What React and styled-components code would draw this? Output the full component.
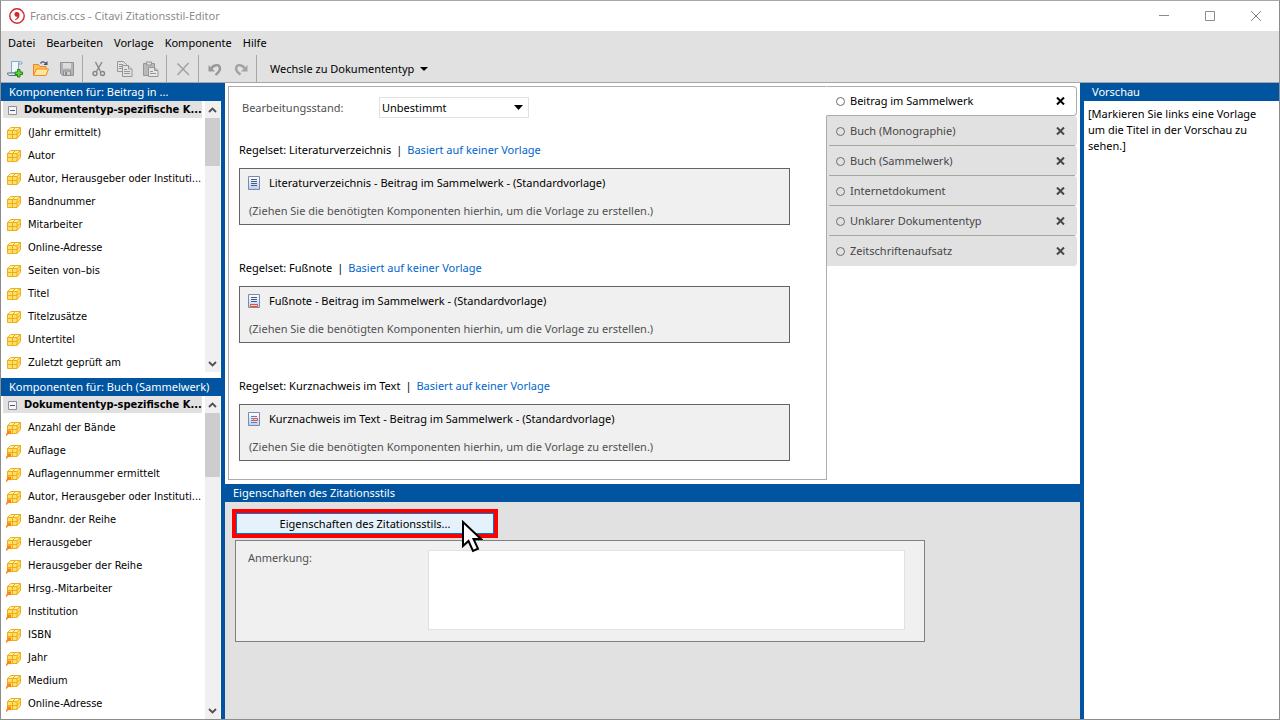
import React from 'react';
import styled, { createGlobalStyle } from 'styled-components';

const BLUE = '#0054a0';
const CHROME = '#e1e1e1';

const GlobalStyle = createGlobalStyle`
  * { box-sizing: border-box; }
  body {
    margin: 0;
    font-family: 'Noto Sans', 'Segoe UI', sans-serif;
    font-size: 11px;
    line-height: 16px;
    color: #000;
  }
  button, select, textarea {
    font: inherit;
    color: inherit;
    margin: 0;
    padding: 0;
    border: 0;
    border-radius: 0;
    background: none;
  }
  svg { display: block; flex: none; }
`;

const Window = styled.div`
  height: 100vh;
  min-height: 600px;
  display: flex;
  flex-direction: column;
  background: #fff;
  border: 1px solid #8c8c8c;
  border-top-color: #a8a8a8;
`;

const TitleBar = styled.header`
  display: flex;
  align-items: center;
  height: 30px;
  flex: none;
  padding-left: 8px;
  gap: 5px;
  color: #8c8c8c;
`;

const Title = styled.h1`
  flex: 1;
  margin: 0;
  font-size: 11px;
  font-weight: 400;
`;

const Controls = styled.div`
  display: flex;
`;

const WindowButton = styled.button`
  width: 46px;
  height: 30px;
  display: grid;
  place-items: center;
  color: #8c8c8c;
`;

const MenuBar = styled.nav`
  display: flex;
  align-items: center;
  gap: 11px;
  height: 24px;
  flex: none;
  padding-left: 7px;
  background: ${CHROME};
`;

const ToolBar = styled.div`
  display: flex;
  align-items: center;
  height: 28px;
  flex: none;
  background: ${CHROME};
  border-bottom: 1px solid #a6a6a6;
`;

const ToolGroup = styled.div`
  display: flex;
  align-items: center;
  align-self: stretch;
  gap: 10px;
  padding: 0 7px 0 8px;
  border-right: 1px solid #a6a6a6;

  &:first-child { padding-left: 6px; }
`;

const DocTypeButton = styled.button`
  display: flex;
  align-items: center;
  gap: 6px;
  margin-left: 13px;
`;

const Body = styled.div`
  flex: 1;
  min-height: 0;
  display: flex;
`;

const Sidebar = styled.aside`
  width: 224px;
  flex: none;
  display: flex;
  flex-direction: column;
  border-right: 4px solid ${BLUE};
`;

const PanelTitle = styled.h2`
  margin: 0;
  flex: none;
  height: 18px;
  padding-left: 8px;
  line-height: 18px;
  font-size: 11px;
  font-weight: 400;
  color: #fff;
  background: ${BLUE};
  white-space: nowrap;
`;

const ListArea = styled.section`
  display: flex;
  min-height: 0;
  flex: ${(p) => (p.$fill ? '1' : 'none')};
  height: ${(p) => (p.$fill ? 'auto' : '277px')};
  padding-right: 1px;
  padding-bottom: ${(p) => (p.$fill ? '0' : '6px')};
`;

const ListColumn = styled.div`
  flex: 1;
  min-width: 0;
  overflow: hidden;
  padding: 0 3px 0 2px;
  font-family: 'DejaVu Sans Condensed', Tahoma, sans-serif;
`;

const GroupRow = styled.div`
  display: flex;
  align-items: center;
  gap: 7px;
  height: 17px;
  margin-bottom: 3px;
  padding: 1px 0 0 5px;
  background: ${CHROME};
  font-weight: 700;
  line-height: 16px;
  white-space: nowrap;
`;

const PlainButton = styled.button`
  display: grid;
  place-items: center;
`;

const Items = styled.ul`
  margin: 0;
  padding: 0;
  list-style: none;
`;

const Item = styled.li`
  display: flex;
  align-items: center;
  gap: 6px;
  height: 23px;
  padding-left: 3px;
  white-space: nowrap;
`;

const ScrollBar = styled.div`
  width: 15px;
  flex: none;
  display: flex;
  flex-direction: column;
  background: #f0f0f0;
`;

const ScrollButton = styled.button`
  height: 17px;
  display: grid;
  place-items: center;
  color: #505050;
`;

const Thumb = styled.div`
  height: ${(p) => (p.$long ? '64px' : '48px')};
  margin-bottom: auto;
  background: #cdcdcd;
`;

const Main = styled.main`
  flex: 1;
  min-width: 0;
  display: flex;
  flex-direction: column;
`;

const Workspace = styled.div`
  flex: 1;
  min-height: 0;
  display: flex;
  padding: 3px 3px 4px;
`;

const Canvas = styled.section`
  flex: 1;
  min-width: 0;
  padding: 10px 36px 0 10px;
  border: 1px solid #acacac;
`;

const StatusRow = styled.div`
  display: flex;
  align-items: center;
  padding-left: 3px;
  height: 21px;
  margin-bottom: 24px;
  color: #505050;
`;

const StatusLabel = styled.label`
  width: 137px;
`;

const SelectBox = styled.div`
  display: grid;
  align-items: center;
  width: 150px;
  height: 21px;
  border: 1px solid #e1e1e1;

  & > * { grid-area: 1 / 1; }
  & > svg { justify-self: end; margin-right: 5px; pointer-events: none; }
`;

const Select = styled.select`
  appearance: none;
  width: 100%;
  height: 19px;
  padding-left: 2px;
  color: #000;
`;

const RuleSet = styled.section`
  margin-bottom: 35px;
`;

const RuleTitle = styled.h3`
  display: flex;
  gap: 5px;
  margin: 0 0 10px;
  font-size: 11px;
  font-weight: 400;
`;

const Link = styled.a`
  color: #0066cc;
  text-decoration: none;
`;

const TemplateBox = styled.div`
  padding: 6px 8px 5px;
  border: 1px solid #646464;
  background: #f0f0f0;
`;

const TemplateName = styled.div`
  display: flex;
  align-items: center;
  gap: 9px;
  margin-bottom: 12px;
`;

const Hint = styled.p`
  margin: 0;
  padding-left: 1px;
  color: #505050;
`;

const Tabs = styled.div`
  width: 251px;
  flex: none;
  margin-left: -1px;
`;

const Tab = styled.div`
  display: flex;
  align-items: center;
  height: 30px;
  padding-right: 11px;
  border: 1px solid #acacac;
  border-left-color: #fff;
  border-radius: 0 4px 4px 0;
  background: #fff;
`;

const IdleTab = styled(Tab)`
  margin-left: 1px;
  padding-right: 12px;
  border: 0;
  border-radius: 0 3px 3px 0;
  color: #464646;
  background: linear-gradient(#a6a89c, #a6a89c) 2px 100% / calc(100% - 4px) ${(p) => (p.$last ? '0' : '1px')} no-repeat ${CHROME};
`;

const TabButton = styled.button`
  flex: 1;
  display: flex;
  align-items: center;
  gap: 5px;
  padding-left: 9px;
  text-align: left;
`;

const Ring = styled.span`
  width: 9px;
  height: 9px;
  border: 1px solid #6e6e6e;
  border-radius: 50%;
`;

const Properties = styled.section`
  height: 235px;
  flex: none;
  background: ${CHROME};
`;

const PropertiesBody = styled.div`
  padding: 7px 7px 0;
`;

const Highlight = styled.div`
  position: relative;
  width: 266px;
  border: 4px solid #ff0000;
`;

const PropertiesButton = styled.button`
  display: block;
  width: 100%;
  height: 21px;
  border: 1px solid #0078d7;
  background: #e5f1fb;
`;

const Pointer = styled.svg`
  position: absolute;
  left: 225px;
  top: 7px;
`;

const NoteBox = styled.div`
  display: flex;
  width: 690px;
  max-width: 100%;
  margin: 2px 0 0 3px;
  padding: 9px 19px 11px 12px;
  border: 1px solid #808080;
  background: #f0f0f0;
  color: #505050;
`;

const NoteLabel = styled.label`
  width: 180px;
`;

const NoteText = styled.textarea`
  flex: 1;
  height: 80px;
  resize: none;
  border: 1px solid #e1e1e1;
  background: #fff;
`;

const Preview = styled.aside`
  width: 199px;
  flex: none;
  border-left: 4px solid ${BLUE};
`;

const PreviewText = styled.p`
  margin: 0;
  padding: 5px 4px;
`;

const Logo = () => (
  <svg width="16" height="16" viewBox="0 0 16 16">
    <circle cx="8" cy="8" r="7.200" fill="#fff" stroke="#d8232a" strokeWidth="1.400" />
    <path d="M8 4a2.300 2.300 0 1 0 .4 4.500C8.200 9.800 7.400 10.700 6 11.400l.4.800c2.600-1 4.100-3 4.100-5.300C10.500 5.100 9.500 4 8 4z" fill="#d8232a" />
  </svg>
);

const Caret = () => (
  <svg width="9" height="5" viewBox="0 0 9 5"><path d="M0 0h9L4.500 5z" fill="#000" /></svg>
);

const SmallCaret = () => (
  <svg width="8" height="4" viewBox="0 0 8 4"><path d="M0 0h8L4 4z" fill="#000" /></svg>
);

const NewIcon = () => (
  <svg width="16" height="18" viewBox="0 0 16 18">
    <path d="M4.500 1.500h8c-1 1-1 2-1 3.500v8h-7z" fill="#eff6fd" stroke="#8aa6c4" />
    <path d="M12 1.500h1.500c1.200 0 1.500 1 1.500 2.500h-3.500c0-1.300 0-2 .5-2.500z" fill="#cfe0f2" stroke="#8aa6c4" />
    <path d="M.5 13h8c0 1.500 1 2.500 2 2.500h-8C1.300 15.500.5 14.500.5 13z" fill="#dfeaf6" stroke="#526f91" />
    <path d="M10.500 9.500h2.500v2.500h2.500v2.500H13V17h-2.500v-2.500H8V12h2.500z" fill="#61d33b" stroke="#238512" />
  </svg>
);

const OpenIcon = () => (
  <svg width="16" height="18" viewBox="0 0 16 18">
    <path d="M.5 15V4.500h5l1.500 2h6V15z" fill="#ffc35c" stroke="#ef8526" />
    <path d="M.5 15.500 3.500 9h12L13 15.500z" fill="#ffe6a0" stroke="#f28b27" />
    <path d="M7.500 3.500c1-2 3.500-2.300 5-.3" fill="none" stroke="#405068" strokeWidth="1.300" />
    <path d="M14.500 1v4h-4z" fill="#405068" />
  </svg>
);

const SaveIcon = () => (
  <svg width="16" height="16" viewBox="0 0 16 16">
    <path d="M1.500 1.500h13v13h-11l-2-2z" fill="#b4b4b4" stroke="#929292" />
    <path d="M4 2h8v5.500H4z" fill="#dcdcdc" />
    <path d="M4.500 10h7v4.500h-7z" fill="#cecece" stroke="#8c8c8c" />
    <path d="M6 11h2v3H6z" fill="#8c8c8c" />
  </svg>
);

const CutIcon = () => (
  <svg width="16" height="16" viewBox="0 0 16 16" fill="none" stroke="#858585">
    <path d="M4.500 1 9.500 10.500M11 1 5.500 10.500" strokeWidth="1.400" />
    <circle cx="4" cy="12.500" r="2" strokeWidth="1.400" />
    <circle cx="11.500" cy="12.500" r="2" strokeWidth="1.400" />
  </svg>
);

const CopyIcon = () => (
  <svg width="16" height="16" viewBox="0 0 16 16" fill="#e2e2e2" stroke="#969696">
    <path d="M.5.5h6l3 3v7h-9z" />
    <path d="M2 3.500h4M2 5.500h4M2 7.500h3" />
    <path d="M5.500 4.500h6l3.500 3.500v7.500H5.500z" />
    <path d="M11.500 4.500V8H15M7 8.500h3M7 10.500h6M7 12.500h6" />
  </svg>
);

const PasteIcon = () => (
  <svg width="16" height="16" viewBox="0 0 16 16" fill="#b9b9b9" stroke="#969696">
    <path d="M.5 2.500h11v12H.5z" />
    <path d="M3.500 1h5v3h-5z" fill="#dedede" />
    <path d="M5.500 6.500h6l3.500 3v6H5.500z" fill="#e6e6e6" />
    <path d="M11.500 6.500v3H15M7 10.500h3M7 12.500h6" />
  </svg>
);

const DeleteIcon = () => (
  <svg width="16" height="16" viewBox="0 0 16 16" fill="none" stroke="#a3a3a3" strokeWidth="1.600">
    <path d="M2.500 2.500 14 14M13.500 2 2.500 14" />
  </svg>
);

const UndoIcon = () => (
  <svg width="16" height="16" viewBox="0 0 16 16">
    <path d="M4 8C6 3.500 12.500 2.500 13 7.500c0 3-2.500 4.500-4.500 6.500" fill="none" stroke="#999" strokeWidth="2.400" />
    <path d="M1.500 4v6.500H8z" fill="#999" />
  </svg>
);

const RedoIcon = () => (
  <svg width="16" height="16" viewBox="0 0 16 16">
    <path d="M12 8C10 3.500 3.500 2.500 3 7.500c0 3 2.500 4.500 4.500 6" fill="none" stroke="#a3a3a3" strokeWidth="2.400" />
    <path d="M14.500 4v6.500H8z" fill="#a3a3a3" />
  </svg>
);

const BoxIcon = ({ shortcut }) => (
  <svg width="16" height="16" viewBox="0 0 16 16">
    <path d="M1.500 5.500 5 2.500h9.500v7l-3.500 4H1.500z" fill="#ffde70" stroke="#eeae16" />
    <path d="M2 5.500h9L14 3H5z" fill="#fff0ae" />
    <path d="M1.500 5.500H11v8M11 5.500l3.500-3M6.500 5.500v8M6.500 5.500l3-3M1.500 9.500H11l3.500-3.500" fill="none" stroke="#eeae16" />
    {shortcut && <path d="M0 15.500c0-1.500.6-2.600 1.600-3.300L.8 10.500H5v4l-1.300-1C2.300 14 1.200 14.500 1 16z" fill="#ff8214" />}
  </svg>
);

const PageIcon = ({ kind }) => (
  <svg width="12" height="16" viewBox="0 0 12 16">
    <defs>
      <linearGradient id="sheet" x2="0" y2="1">
        <stop offset="0" stopColor="#fff" />
        <stop offset="1" stopColor="#b8cdf4" />
      </linearGradient>
    </defs>
    <path d="M.5 1.500h11v13H.5z" fill="url(#sheet)" stroke="#7b8cab" />
    {kind === 'list' && <path d="M3 4.500h6M3 6.500h6M3 8.500h6M3 10.500h6" stroke="#4c5c7c" />}
    {kind === 'foot' && (
      <>
        <path d="M3 4.500h6M3 6.500h6M3 8.500h6" stroke="#4c5c7c" />
        <path d="M2.500 11.500h7v2h-7z" fill="#ffd8cc" stroke="#e8502a" />
      </>
    )}
    {kind === 'text' && (
      <>
        <path d="M3 5.500h6M3 7.500h2M3 9.500h2M3 11.500h6" stroke="#5f80be" />
        <path d="M5.500 7.500h4v2h-4z" fill="#ffd8cc" stroke="#e8502a" />
      </>
    )}
  </svg>
);

const CollapseIcon = () => (
  <svg width="9" height="9" viewBox="0 0 9 9">
    <path d="M.5.5h8v8h-8z" fill="#f6f6f6" stroke="#919191" />
    <path d="M2 4.500h5" stroke="#3c5a9a" />
  </svg>
);

const Chevron = ({ up }) => (
  <svg width="9" height="6" viewBox="0 0 9 6" fill="none" stroke="currentColor" strokeWidth="1.800">
    <path d={up ? 'M1 5 4.500 1.500 8 5' : 'M1 1l3.500 3.500L8 1'} />
  </svg>
);

const CrossIcon = () => (
  <svg width="9" height="8" viewBox="0 0 9 8" stroke="currentColor" strokeWidth="2">
    <path d="M1 .5 8 7.500M8 .5 1 7.500" />
  </svg>
);

const TOOLS = [
  [['Neu', NewIcon], ['Öffnen', OpenIcon], ['Speichern', SaveIcon]],
  [['Ausschneiden', CutIcon], ['Kopieren', CopyIcon], ['Einfügen', PasteIcon]],
  [['Löschen', DeleteIcon]],
  [['Rückgängig', UndoIcon], ['Wiederholen', RedoIcon]],
];

const MENUS = ['Datei', 'Bearbeiten', 'Vorlage', 'Komponente', 'Hilfe'];

const ARTICLE_PARTS = [
  '(Jahr ermittelt)', 'Autor', 'Autor, Herausgeber oder Instituti...', 'Bandnummer', 'Mitarbeiter',
  'Online-Adresse', 'Seiten von–bis', 'Titel', 'Titelzusätze', 'Untertitel', 'Zuletzt geprüft am',
];

const BOOK_PARTS = [
  'Anzahl der Bände', 'Auflage', 'Auflagennummer ermittelt', 'Autor, Herausgeber oder Instituti...',
  'Bandnr. der Reihe', 'Herausgeber', 'Herausgeber der Reihe', 'Hrsg.-Mitarbeiter', 'Institution',
  'ISBN', 'Jahr', 'Medium', 'Online-Adresse',
];

const RULES = [
  ['Literaturverzeichnis', 'list'],
  ['Fußnote', 'foot'],
  ['Kurznachweis im Text', 'text'],
];

const OTHER_TYPES = [
  'Buch (Monographie)', 'Buch (Sammelwerk)', 'Internetdokument', 'Unklarer Dokumententyp', 'Zeitschriftenaufsatz',
];

const WindowControls = () => (
  <Controls>
    <WindowButton aria-label="Minimieren">
      <svg width="11" height="11" stroke="currentColor"><path d="M0 4.500h10" /></svg>
    </WindowButton>
    <WindowButton aria-label="Maximieren">
      <svg width="11" height="11" fill="none" stroke="currentColor"><path d="M.5.5h9v9H.5z" /></svg>
    </WindowButton>
    <WindowButton aria-label="Fenster schließen">
      <svg width="11" height="11" stroke="currentColor"><path d="M0 0l10 10M10 0L0 10" /></svg>
    </WindowButton>
  </Controls>
);

const ComponentList = ({ items, fill, shortcut }) => (
  <ListArea $fill={fill}>
    <ListColumn>
      <GroupRow>
        <PlainButton aria-label="Gruppe zuklappen"><CollapseIcon /></PlainButton>
        Dokumententyp-spezifische K...
      </GroupRow>
      <Items>
        {items.map((name) => (
          <Item key={name}><BoxIcon shortcut={shortcut} />{name}</Item>
        ))}
      </Items>
    </ListColumn>
    <ScrollBar>
      <ScrollButton aria-label="Nach oben"><Chevron up /></ScrollButton>
      <Thumb $long={fill} />
      <ScrollButton aria-label="Nach unten"><Chevron /></ScrollButton>
    </ScrollBar>
  </ListArea>
);

export default function App() {
  return (
    <>
      <GlobalStyle />
      <Window>
        <TitleBar>
          <Logo />
          <Title>Francis.ccs - Citavi Zitationsstil-Editor</Title>
          <WindowControls />
        </TitleBar>
        <MenuBar>
          {MENUS.map((m) => <PlainButton key={m}>{m}</PlainButton>)}
        </MenuBar>
        <ToolBar>
          {TOOLS.map((group, i) => (
            <ToolGroup key={i}>
              {group.map(([label, Icon]) => (
                <PlainButton key={label} aria-label={label}><Icon /></PlainButton>
              ))}
            </ToolGroup>
          ))}
          <DocTypeButton>Wechsle zu Dokumententyp<SmallCaret /></DocTypeButton>
        </ToolBar>
        <Body>
          <Sidebar>
            <PanelTitle>Komponenten für: Beitrag in ...</PanelTitle>
            <ComponentList items={ARTICLE_PARTS} />
            <PanelTitle>Komponenten für: Buch (Sammelwerk)</PanelTitle>
            <ComponentList items={BOOK_PARTS} fill shortcut />
          </Sidebar>
          <Main>
            <Workspace>
              <Canvas>
                <StatusRow>
                  <StatusLabel htmlFor="status">Bearbeitungsstand:</StatusLabel>
                  <SelectBox>
                    <Select id="status"><option>Unbestimmt</option></Select>
                    <Caret />
                  </SelectBox>
                </StatusRow>
                {RULES.map(([name, kind]) => (
                  <RuleSet key={name}>
                    <RuleTitle>
                      <span>Regelset: {name}</span>
                      <span>|</span>
                      <Link href="#vorlage">Basiert auf keiner Vorlage</Link>
                    </RuleTitle>
                    <TemplateBox>
                      <TemplateName>
                        <PageIcon kind={kind} />
                        {name} - Beitrag im Sammelwerk - (Standardvorlage)
                      </TemplateName>
                      <Hint>(Ziehen Sie die benötigten Komponenten hierhin, um die Vorlage zu erstellen.)</Hint>
                    </TemplateBox>
                  </RuleSet>
                ))}
              </Canvas>
              <Tabs>
                <Tab>
                  <TabButton><Ring />Beitrag im Sammelwerk</TabButton>
                  <PlainButton aria-label="Schließen"><CrossIcon /></PlainButton>
                </Tab>
                {OTHER_TYPES.map((name, i) => (
                  <IdleTab key={name} $last={i === OTHER_TYPES.length - 1}>
                    <TabButton><Ring />{name}</TabButton>
                    <PlainButton aria-label="Schließen"><CrossIcon /></PlainButton>
                  </IdleTab>
                ))}
              </Tabs>
            </Workspace>
            <Properties>
              <PanelTitle>Eigenschaften des Zitationsstils</PanelTitle>
              <PropertiesBody>
                <Highlight>
                  <PropertiesButton>Eigenschaften des Zitationsstils...</PropertiesButton>
                  <Pointer width="22" height="33" viewBox="0 0 22 33">
                    <path d="M2 2v24l5.500-5 4.500 10 5-2.300L12.500 19H20z" fill="#fff" stroke="#000" strokeWidth="2" />
                  </Pointer>
                </Highlight>
                <NoteBox>
                  <NoteLabel htmlFor="note">Anmerkung:</NoteLabel>
                  <NoteText id="note" />
                </NoteBox>
              </PropertiesBody>
            </Properties>
          </Main>
          <Preview>
            <PanelTitle>Vorschau</PanelTitle>
            <PreviewText>[Markieren Sie links eine Vorlage um die Titel in der Vorschau zu sehen.]</PreviewText>
          </Preview>
        </Body>
      </Window>
    </>
  );
}
